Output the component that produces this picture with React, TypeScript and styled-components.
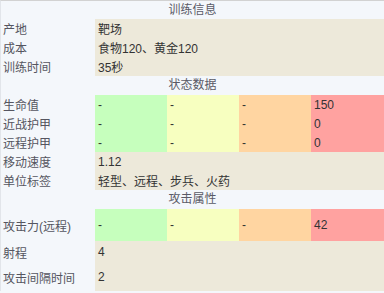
import React from "react";
import styled, { createGlobalStyle } from "styled-components";

const Global = createGlobalStyle`
  html, body { margin: 0; padding: 0; background: #f4f7fb; }
  body { font-family: "Liberation Sans", Arial, "Noto Sans CJK SC", sans-serif; font-size: 12px; }
`;

const Table = styled.div`
  width: 384px;
  box-sizing: border-box;
  border-top: 1px solid #d2d2d2;
  border-left: 1px solid #e2e5ea;
  background: #f4f7fb;
  display: flex;
  flex-direction: column;
`;

const Header = styled.div<{ $h?: number }>`
  height: ${(p) => p.$h ?? 19}px;
  line-height: ${(p) => p.$h ?? 19}px;
  text-align: center;
  color: #5a5a66;
`;

const Row = styled.div<{ $h?: number }>`
  display: grid;
  grid-template-columns: 94px 72px 72px 72px 73px;
  height: ${(p) => p.$h ?? 19}px;
`;

const Label = styled.div`
  padding-left: 2px;
  color: #555560;
  display: flex;
  align-items: center;
  white-space: nowrap;
`;

const Value = styled.div<{ $bg?: string; $span?: number }>`
  grid-column: span ${(p) => p.$span ?? 1};
  background: ${(p) => p.$bg ?? "#ede9da"};
  color: #333;
  padding-left: 3px;
  display: flex;
  align-items: center;
  white-space: nowrap;
`;

const COLORS = ["#c6ffbd", "#f7ffc0", "#ffd5a1", "#ffa2a0"];

type Simple = { label: string; value: string; h?: number };

const SimpleRow = ({ label, value, h }: Simple) => (
  <Row $h={h}>
    <Label>{label}</Label>
    <Value $span={4}>{value}</Value>
  </Row>
);

const TierRow = ({ label, values, h }: { label: string; values: string[]; h?: number }) => (
  <Row $h={h}>
    <Label>{label}</Label>
    {values.map((v, i) => (
      <Value key={i} $bg={COLORS[i]}>
        {v}
      </Value>
    ))}
  </Row>
);

export default function App() {
  return (
    <>
      <Global />
      <Table>
        <Header $h={18}>训练信息</Header>
        <SimpleRow label="产地" value="靶场" />
        <SimpleRow label="成本" value="食物120、黄金120" />
        <SimpleRow label="训练时间" value="35秒" />
        <Header>状态数据</Header>
        <TierRow label="生命值" values={["-", "-", "-", "150"]} />
        <TierRow label="近战护甲" values={["-", "-", "-", "0"]} />
        <TierRow label="远程护甲" values={["-", "-", "-", "0"]} />
        <SimpleRow label="移动速度" value="1.12" />
        <SimpleRow label="单位标签" value="轻型、远程、步兵、火药" />
        <Header>攻击属性</Header>
        <TierRow label="攻击力(远程)" values={["-", "-", "-", "42"]} h={32} />
        <SimpleRow label="射程" value="4" h={22} />
        <SimpleRow label="攻击间隔时间" value="2" h={28} />
      </Table>
    </>
  );
}
